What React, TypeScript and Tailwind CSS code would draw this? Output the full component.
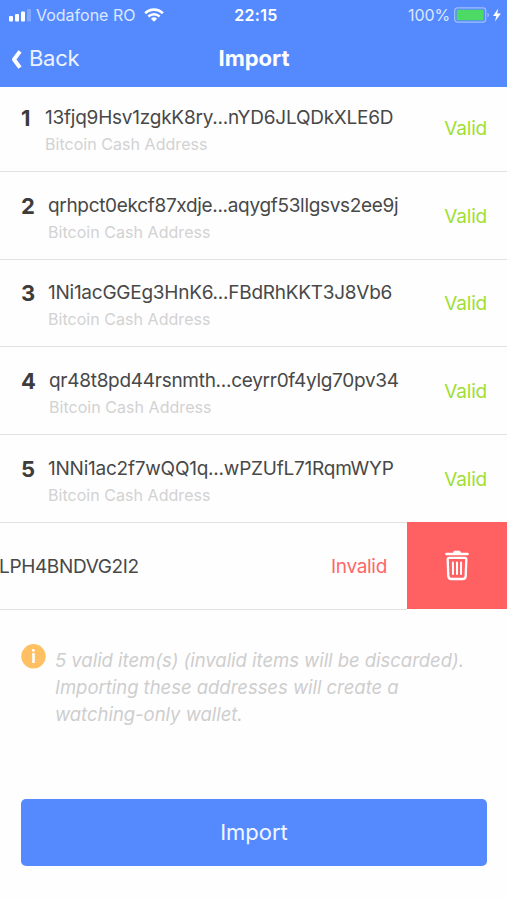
import React from 'react';

interface ImportItem {
  address: string;
  indexWidth: string;
  tracking: string;
}

const items: ImportItem[] = [
  { address: '13fjq9Hsv1zgkK8ry...nYD6JLQDkXLE6D', indexWidth: 'w-6', tracking: 'tracking-[-0.23px]' },
  { address: 'qrhpct0ekcf87xdje...aqygf53llgsvs2ee9j', indexWidth: 'w-[27px]', tracking: 'tracking-[-0.32px]' },
  { address: '1Ni1acGGEg3HnK6...FBdRhKKT3J8Vb6', indexWidth: 'w-[27px]', tracking: 'tracking-[-0.25px]' },
  { address: 'qr48t8pd44rsnmth...ceyrr0f4ylg70pv34', indexWidth: 'w-7', tracking: 'tracking-[-0.28px]' },
  { address: '1NNi1ac2f7wQQ1q...wPZUfL71RqmWYP', indexWidth: 'w-[27px]', tracking: 'tracking-[-0.23px]' }
];

const StatusBar: React.FC = () => (
  <div className="grid h-[30px] grid-cols-[1fr_auto_1fr] items-center pl-[10px] pr-[5px] text-[16px] leading-5 text-[#dce7ff]">
    <div className="-ml-px flex items-center">
      <svg width="23" height="13" viewBox="0 0 23 13" fill="#fff">
        <rect x="0" y="7" width="4" height="5.5" rx="1" />
        <rect x="6" y="5" width="4" height="7.5" rx="1" />
        <rect x="12" y="2.5" width="4" height="10" rx="1" />
        <rect x="18" y="0" width="4" height="12.5" rx="1" fillOpacity="0.25" />
      </svg>
      <span className="ml-[4px]">Vodafone RO</span>
      <svg className="ml-[9px]" width="20" height="14" viewBox="0 0 20 14" fill="none" stroke="#fff">
        <path d="M1.2 5.2C6.2.4 13.8.4 18.8 5.2" strokeWidth="2.6" />
        <path d="M4.4 8.5c3.2-3 8-3 11.2 0" strokeWidth="2.5" />
        <path d="M10 13.8 6.9 10.8a4.5 4.5 0 0 1 6.2 0Z" fill="#fff" stroke="none" />
      </svg>
    </div>
    <span className="font-semibold tracking-[0.3px] text-white">22:15</span>
    <div className="flex items-center justify-end">
      <span className="tracking-[-0.1px]">100%</span>
      <svg className="ml-[4px]" width="48" height="16" viewBox="0 0 48 16">
        <rect x="0.7" y="0.9" width="31" height="14.2" rx="2.8" fill="none" stroke="#9fbfff" strokeWidth="1.2" />
        <rect x="2.7" y="2.8" width="27" height="10.4" rx="1" fill="#4cd964" />
        <path d="M33.5 5.8c2 .8 2 3.6 0 4.4Z" fill="#9fbfff" />
        <path d="M44.2 1.5 39 8.9h3.4L40.9 14.5l6-7.9h-3.6Z" fill="#fff" />
      </svg>
    </div>
  </div>
);

const TrashIcon: React.FC = () => (
  <svg width="24" height="32" viewBox="0 0 24 32" fill="none" stroke="#fff" strokeLinecap="round" strokeLinejoin="round">
    <path d="M1.4 4h21.2" strokeWidth="2.4" />
    <path d="M8.7 3.4V2.2q0-1 1-1h4.6q1 0 1 1v1.2Z" fill="#fff" strokeWidth="1" />
    <path d="M4.2 7.8h15.6q1.6 0 1.5 1.6l-.6 16.8q-.2 2.8-3 2.8H6.3q-2.8 0-3-2.8L2.7 9.4q-.1-1.6 1.5-1.6Z" strokeWidth="2.3" />
    <path d="M7.9 12.4l.1 11.6M12 12.4V24M16.1 12.4L16 24" strokeWidth="2" />
  </svg>
);

const App: React.FC = () => {
  return (
    <div className="flex h-[900px] w-[507px] flex-col overflow-hidden bg-[#fefefe] font-['Inter',sans-serif] text-[#484848]">
      {/* Header */}
      <header className="h-[87px] bg-[#558aff] text-white">
        <StatusBar />
        <div className="grid h-14 grid-cols-[1fr_auto_1fr] items-center pr-[8px] pl-[11px]">
          <button className="-ml-px flex items-center text-[22px] tracking-[-0.3px] text-[#edf3ff]">
            <svg className="mt-[3px]" width="12" height="19" viewBox="0 0 12 19" fill="none" stroke="#fff" strokeWidth="4">
              <path d="M10 1.4 4 9.5l6 8.1" strokeLinejoin="round" />
            </svg>
            <span className="ml-[7px]">Back</span>
          </button>
          <h1 className="mr-[2px] text-[22px] font-bold">Import</h1>
        </div>
      </header>

      {/* Address list */}
      <ul className="h-[435px]">
        {items.map(({ address, indexWidth, tracking }, i) => (
          <li key={address} className="flex h-[87.7px] items-start border-b border-[#e2e2e2] pt-[20.5px] pr-[20px] pl-[21px] first:h-[85px] first:pt-[18px]">
            <span className={`shrink-0 text-[22px] leading-[26px] font-bold text-[#3c3c3c] ${indexWidth}`}>{i + 1}</span>
            <div className="flex-1 whitespace-nowrap">
              <div className={`text-[19px] leading-[26px] ${tracking}`}>{address}</div>
              <div className="text-[16px] leading-[27px] tracking-[0.04px] text-[#d2d2d2]">Bitcoin Cash Address</div>
            </div>
            <span className="mt-[11px] text-[19px] leading-[26px] tracking-[-0.2px] text-[#a0df35]">Valid</span>
          </li>
        ))}
      </ul>

      {/* Swiped row */}
      <div className="flex h-[88px] items-stretch">
        <div className="flex flex-1 items-center justify-between border-b border-[#e2e2e2] pt-[3px] pr-[20px] text-[19px]">
          <span className="-ml-px tracking-[-0.35px]">LPH4BNDVG2I2</span>
          <span className="tracking-[-0.3px] text-[#ff6668]">Invalid</span>
        </div>
        <button className="mb-px flex w-[100px] items-center justify-center bg-[#ff6062]">
          <TrashIcon />
        </button>
      </div>

      <div className="mt-[34px] flex items-start px-[21px]">
        <svg className="shrink-0" width="25" height="25" viewBox="0 0 25 25">
          <circle cx="12.5" cy="12.3" r="12.2" fill="#ffc064" />
          <circle cx="12.4" cy="6.4" r="1.4" fill="#fff" />
          <path d="M11 9.3h2.8v9.7h-2.6v-8.5H11Z" fill="#fff" />
        </svg>
        <p className="ml-[9px] mt-[3px] text-[18.5px] leading-[27px] tracking-[-0.03px] whitespace-nowrap text-[#cecece] italic">
          5 valid item(s) (invalid items will be discarded).
          <br />
          Importing these addresses will create a
          <br />
          watching-only wallet.
        </p>
      </div>

      <button className="mr-[20px] mb-[34px] ml-[21px] mt-auto h-[67px] rounded-[5px] bg-[#558aff] text-[22px] text-[#f2f6ff]">
        Import
      </button>
    </div>
  );
};

export default App;
